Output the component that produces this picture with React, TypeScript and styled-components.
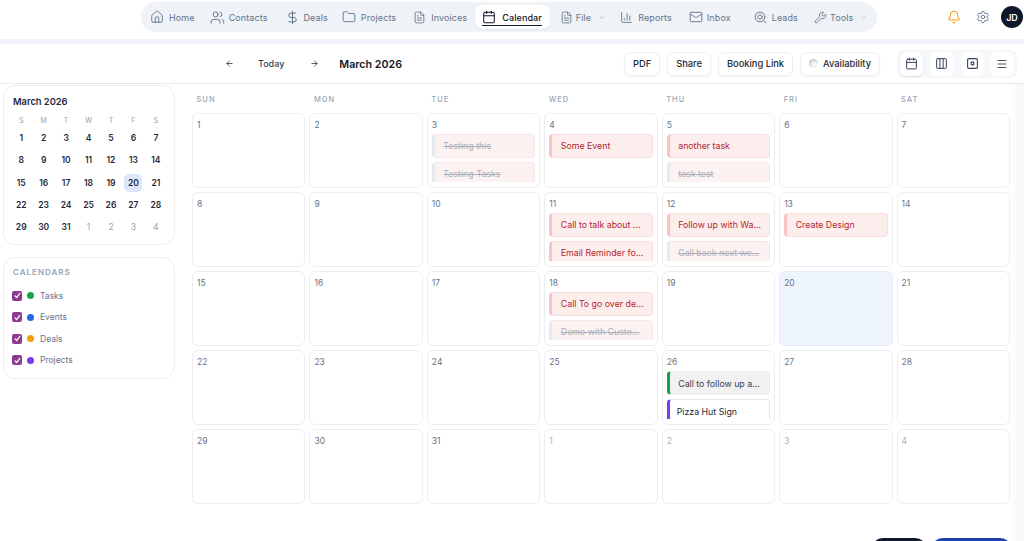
import styled, { createGlobalStyle } from "styled-components";
import {
  ArrowLeft,
  ArrowRight,
  Bell,
  Calendar,
  ChartColumn,
  ChevronDown,
  Columns3,
  DollarSign,
  FileText,
  Folder,
  House,
  Mail,
  Menu,
  Settings,
  Users,
  Wrench,
} from "lucide-react";

const GlobalStyle = createGlobalStyle`
  html, body {
    margin: 0;
    padding: 0;
    height: 541px;
    overflow: hidden;
    background: #fff;
    font-family: Inter, "Liberation Sans", sans-serif;
  }
  * { box-sizing: border-box; }
`;

const LeadsIcon = () => (
  <svg width="13" height="13" viewBox="0 0 24 24" fill="none" stroke="currentColor" strokeWidth="1.8" strokeLinecap="round">
    <circle cx="11" cy="11" r="9" />
    <circle cx="11" cy="11" r="4" />
    <path d="M18 18l4 4" />
  </svg>
);

const FocusIcon = () => (
  <svg width="13" height="13" viewBox="0 0 24 24" fill="none" stroke="currentColor" strokeWidth="2">
    <rect x="3" y="3" width="18" height="18" rx="2" />
    <rect x="9.5" y="9.5" width="5" height="5" rx="1" />
  </svg>
);

const navItems = [
  { label: "Home", icon: <House size={14} strokeWidth={1.6} />, gap: 5, after: 15 },
  { label: "Contacts", icon: <Users size={15} strokeWidth={1.6} />, gap: 4, after: 17 },
  { label: "Deals", icon: <DollarSign size={15} strokeWidth={1.6} />, gap: 4, after: 14 },
  { label: "Projects", icon: <Folder size={14} strokeWidth={1.6} />, gap: 5, after: 17 },
  { label: "Invoices", icon: <FileText size={13} strokeWidth={1.6} />, gap: 5, after: 8 },
  { label: "Calendar", icon: <Calendar size={14} strokeWidth={1.8} />, gap: 6, after: 10, active: true },
  { label: "File", icon: <FileText size={13} strokeWidth={1.6} />, gap: 3, after: 15, caret: true },
  { label: "Reports", icon: <ChartColumn size={13} strokeWidth={1.6} />, gap: 5, after: 17 },
  { label: "Inbox", icon: <Mail size={14} strokeWidth={1.6} />, gap: 4, after: 23 },
  { label: "Leads", icon: <LeadsIcon />, gap: 5, after: 16 },
  { label: "Tools", icon: <Wrench size={13} strokeWidth={1.6} />, gap: 3, after: 0, caret: true },
];

const weekdays = ["SUN", "MON", "TUE", "WED", "THU", "FRI", "SAT"];

type CalEvent = { title: string; kind: "open" | "done" | "call" | "project" };

const events: Record<number, CalEvent[]> = {
  3: [
    { title: "Testing this", kind: "done" },
    { title: "Testing Tasks", kind: "done" },
  ],
  4: [{ title: "Some Event", kind: "open" }],
  5: [
    { title: "another task", kind: "open" },
    { title: "task test", kind: "done" },
  ],
  11: [
    { title: "Call to talk about ...", kind: "open" },
    { title: "Email Reminder fo...", kind: "open" },
  ],
  12: [
    { title: "Follow up with Wa...", kind: "open" },
    { title: "Call back next we...", kind: "done" },
  ],
  13: [{ title: "Create Design", kind: "open" }],
  18: [
    { title: "Call To go over de...", kind: "open" },
    { title: "Demo with Custo...", kind: "done" },
  ],
  26: [
    { title: "Call to follow up a...", kind: "call" },
    { title: "Pizza Hut Sign", kind: "project" },
  ],
};

const miniDays = [
  ...Array.from({ length: 31 }, (_, i) => ({ day: i + 1, muted: false })),
  ...[1, 2, 3, 4].map((day) => ({ day, muted: true })),
];

const calendars = [
  { label: "Tasks", color: "#16a34a" },
  { label: "Events", color: "#2563eb" },
  { label: "Deals", color: "#f59e0b" },
  { label: "Projects", color: "#7c3aed" },
];

const App = () => {
  return (
    <Page>
      <GlobalStyle />
      <TopBar>
        <NavPill>
          {navItems.map((item) => (
            <NavItem key={item.label} $active={item.active} $gap={item.gap} $after={item.after}>
              {item.icon}
              <NavLabel $active={item.active}>{item.label}</NavLabel>
              {item.caret && <ChevronDown size={7} color="#94a3b8" style={{ marginLeft: 4 }} />}
            </NavItem>
          ))}
        </NavPill>
        <TopActions>
          <Bell size={14} color="#f59e0b" strokeWidth={1.8} />
          <Settings size={14} color="#64748b" strokeWidth={1.6} />
          <Avatar>JD</Avatar>
        </TopActions>
      </TopBar>

      <Toolbar>
        <DateNav>
          <ArrowLeft size={9} color="#1e293b" strokeWidth={2} />
          <TodayLabel>Today</TodayLabel>
          <ArrowRight size={9} color="#1e293b" strokeWidth={2} />
          <MonthTitle>March 2026</MonthTitle>
        </DateNav>
        <ToolActions>
          <ToolButton>PDF</ToolButton>
          <ToolButton>Share</ToolButton>
          <ToolButton>Booking Link</ToolButton>
          <ToolButton>
            <StatusDot />
            Availability
          </ToolButton>
          <ViewSwitch>
            <ViewButton $active>
              <Calendar size={13} strokeWidth={1.8} />
            </ViewButton>
            <ViewButton>
              <Columns3 size={13} strokeWidth={1.8} />
            </ViewButton>
            <ViewButton>
              <FocusIcon />
            </ViewButton>
            <ViewButton>
              <Menu size={12} strokeWidth={1.8} />
            </ViewButton>
          </ViewSwitch>
        </ToolActions>
      </Toolbar>

      <Body>
        <Sidebar>
          <MiniCard>
            <MiniTitle>March 2026</MiniTitle>
            <MiniGrid>
              {["S", "M", "T", "W", "T", "F", "S"].map((d, i) => (
                <MiniWeekday key={i}>{d}</MiniWeekday>
              ))}
              {miniDays.map((d) => (
                <MiniDay key={`${d.day}-${d.muted}`} $muted={d.muted} $today={!d.muted && d.day === 20}>
                  {d.day}
                </MiniDay>
              ))}
            </MiniGrid>
          </MiniCard>
          <CalendarsCard>
            <CalendarsTitle>CALENDARS</CalendarsTitle>
            {calendars.map((c) => (
              <CalendarRow key={c.label}>
                <CheckBox>
                  <svg width="7" height="7" viewBox="0 0 24 24" fill="none" stroke="#fff" strokeWidth="4" strokeLinecap="round" strokeLinejoin="round">
                    <path d="M4 13l5 6L20 5" />
                  </svg>
                </CheckBox>
                <Dot $color={c.color} />
                <span>{c.label}</span>
              </CalendarRow>
            ))}
          </CalendarsCard>
        </Sidebar>

        <Month>
          <WeekHeader>
            {weekdays.map((d) => (
              <WeekdayLabel key={d}>{d}</WeekdayLabel>
            ))}
          </WeekHeader>
          <MonthGrid>
            {miniDays.map((d) => (
              <DayCell key={`${d.day}-${d.muted}`} $today={!d.muted && d.day === 20}>
                <DayNumber $muted={d.muted}>{d.day}</DayNumber>
                <EventList>
                  {!d.muted &&
                    (events[d.day] || []).map((ev) => (
                      <EventChip key={ev.title} $kind={ev.kind}>
                        {ev.title}
                      </EventChip>
                    ))}
                </EventList>
              </DayCell>
            ))}
          </MonthGrid>
        </Month>
      </Body>

      <EdgeShade />
      <FloatingActions>
        <FloatingButton $color="#0f172a" $width={56} />
        <FloatingButton $color="#1e40af" $width={81} />
      </FloatingActions>
    </Page>
  );
};

const Page = styled.div`
  position: relative;
  width: 1024px;
  height: 541px;
  overflow: hidden;
  background: #fff;
`;

const TopBar = styled.header`
  height: 44px;
  display: flex;
  justify-content: space-between;
  padding: 2px 1px 0 141px;
  background: #fff;
  border-bottom: 5px solid #f1f4f8;
`;

const NavPill = styled.nav`
  height: 30px;
  width: 736px;
  display: flex;
  align-items: center;
  padding-left: 9px;
  border-radius: 15px;
  background: #eff3f8;
`;

const NavItem = styled.div<{ $active?: boolean; $gap: number; $after: number }>`
  position: relative;
  display: flex;
  align-items: center;
  gap: ${(p) => p.$gap}px;
  margin-right: ${(p) => p.$after}px;
  color: ${(p) => (p.$active ? "#111827" : "#64748b")};
  font-size: 9px;
  ${(p) =>
    p.$active &&
    `
    height: 24px;
    padding: 0 8px 0 7px;
    background: #fff;
    border-radius: 8px;
    box-shadow: 0 1px 2px rgba(15, 23, 42, 0.06);

    &::after {
      content: "";
      position: absolute;
      left: 7px;
      right: 8px;
      bottom: 3px;
      height: 1px;
      background: #111827;
    }
  `}
`;

const NavLabel = styled.span<{ $active?: boolean }>`
  font-weight: ${(p) => (p.$active ? 500 : 400)};
  letter-spacing: 0.1px;
`;

const TopActions = styled.div`
  height: 26px;
  margin-top: 2px;
  display: flex;
  align-items: center;
  gap: 15px;
`;

const Avatar = styled.div`
  width: 22px;
  height: 22px;
  margin-left: -4px;
  border-radius: 50%;
  display: flex;
  align-items: center;
  justify-content: center;
  background: #0f172a;
  color: #fff;
  font-size: 9px;
  font-weight: 600;
`;

const Toolbar = styled.div`
  height: 40px;
  display: flex;
  justify-content: space-between;
  align-items: center;
  padding: 0 7px 0 225px;
  border-bottom: 1px solid #e8ebef;
`;

const DateNav = styled.div`
  display: flex;
  align-items: center;
`;

const TodayLabel = styled.span`
  margin: 0 26px 0 24px;
  font-size: 9px;
  font-weight: 500;
  color: #334155;
`;

const MonthTitle = styled.h1`
  margin: 0 0 0 20px;
  padding-top: 1px;
  font-size: 10.7px;
  font-weight: 600;
  color: #111827;
`;

const ToolActions = styled.div`
  display: flex;
  align-items: center;
  gap: 7px;
`;

const ToolButton = styled.button`
  height: 24px;
  padding: 0 8px;
  display: flex;
  align-items: center;
  gap: 5px;
  background: #fff;
  border: 1px solid #eef0f3;
  border-radius: 6px;
  box-shadow: 0 1px 2px rgba(15, 23, 42, 0.05);
  font-family: inherit;
  font-size: 9.3px;
  font-weight: 500;
  color: #1f2937;
`;

const StatusDot = styled.span`
  width: 9px;
  height: 9px;
  border-radius: 50%;
  background: radial-gradient(circle at 60% 65%, #f1f5f9 0 30%, #a8b0ba 90%);
`;

const ViewSwitch = styled.div`
  margin-left: 10px;
  width: 120px;
  height: 28px;
  padding: 2px 3px;
  display: flex;
  justify-content: space-between;
  background: #f6f7f9;
  border-radius: 7px;
`;

const ViewButton = styled.button<{ $active?: boolean }>`
  width: 23px;
  height: 24px;
  padding: 0;
  display: flex;
  align-items: center;
  justify-content: center;
  border: none;
  border-radius: 6px;
  background: #fff;
  color: #334155;
  ${(p) => p.$active && "box-shadow: 0 1px 2px rgba(15, 23, 42, 0.1);"}
`;

const Body = styled.main`
  display: flex;
  align-items: flex-start;
  padding: 1px 14px 0 3px;
`;

const Sidebar = styled.aside`
  width: 172px;
  flex-shrink: 0;
  display: flex;
  flex-direction: column;
  gap: 12px;
`;

const MiniCard = styled.section`
  height: 160px;
  padding: 10px 6px 0;
  border: 1px solid #eceef2;
  border-radius: 12px;
  background: #fff;
`;

const MiniTitle = styled.div`
  height: 12px;
  margin-left: 3px;
  font-size: 9.3px;
  line-height: 12px;
  font-weight: 600;
  color: #1f2937;
`;

const MiniGrid = styled.div`
  margin-top: 5px;
  display: grid;
  grid-template-columns: repeat(7, 22.45px);
  grid-template-rows: 14px repeat(5, 22.3px);
  justify-items: center;
  align-items: center;
`;

const MiniWeekday = styled.span`
  font-size: 7px;
  color: #94a3b8;
`;

const MiniDay = styled.span<{ $muted: boolean; $today: boolean }>`
  width: 18px;
  height: 18px;
  display: flex;
  align-items: center;
  justify-content: center;
  border-radius: 5px;
  font-size: 8.5px;
  font-weight: ${(p) => (p.$muted ? 400 : 600)};
  color: ${(p) => (p.$muted ? "#9ca3af" : "#1f2937")};
  background: ${(p) => (p.$today ? "#dbe8fb" : "transparent")};
`;

const CalendarsCard = styled.section`
  height: 122px;
  padding: 9px 8px 0;
  border: 1px solid #eceef2;
  border-radius: 12px;
  background: #fff;
`;

const CalendarsTitle = styled.div`
  height: 10px;
  margin-bottom: 8px;
  margin-left: 1px;
  font-size: 8px;
  line-height: 10px;
  font-weight: 600;
  letter-spacing: 1px;
  color: #94a3b8;
`;

const CalendarRow = styled.label`
  height: 21.5px;
  display: flex;
  align-items: center;
  font-size: 8.5px;
  color: #64748b;
`;

const CheckBox = styled.span`
  width: 10px;
  height: 10px;
  margin-right: 5px;
  display: flex;
  align-items: center;
  justify-content: center;
  border-radius: 2px;
  background: #8e3b8f;
`;

const Dot = styled.span<{ $color: string }>`
  width: 7px;
  height: 7px;
  margin-right: 6px;
  border-radius: 50%;
  background: ${(p) => p.$color};
`;

const Month = styled.section`
  flex: 1;
  margin-left: 17px;
`;

const WeekHeader = styled.div`
  height: 27.5px;
  padding-top: 2px;
  display: grid;
  grid-template-columns: repeat(7, 1fr);
  column-gap: 4px;
  align-items: center;
`;

const WeekdayLabel = styled.span`
  padding-left: 4.5px;
  font-size: 7.5px;
  font-weight: 500;
  letter-spacing: 1px;
  color: #9aa5b5;
`;

const MonthGrid = styled.div`
  display: grid;
  grid-template-columns: repeat(7, 1fr);
  grid-auto-rows: 75.2px;
  gap: 4px;
`;

const DayCell = styled.div<{ $today: boolean }>`
  padding: 4px 4px 5px 4px;
  display: flex;
  flex-direction: column;
  gap: 3px;
  border: 1px solid ${(p) => (p.$today ? "#e4edf9" : "#eceef2")};
  border-radius: 6px;
  background: ${(p) => (p.$today ? "#eef4fc" : "#fff")};
`;

const DayNumber = styled.span<{ $muted: boolean }>`
  height: 13px;
  flex-shrink: 0;
  font-size: 8.5px;
  line-height: 15px;
  color: ${(p) => (p.$muted ? "#aab2bd" : "#64748b")};
`;

const EventList = styled.div`
  flex: 1;
  min-height: 0;
  overflow: hidden;
  display: flex;
  flex-direction: column;
  gap: 4px;
`;

const eventTheme = {
  open: { bg: "#fdeeee", border: "#fbdcdc", bar: "#f9c4c4", text: "#b3262e", line: "none", indent: 11.5 },
  done: { bg: "#fdf2f2", border: "#fbe6e6", bar: "#e6eaf0", text: "#a9b0bb", line: "line-through", indent: 11.5 },
  call: { bg: "#f1f1f2", border: "#f1f1f2", bar: "#16a34a", text: "#374151", line: "none", indent: 11.5 },
  project: { bg: "#fff", border: "#e5e7eb", bar: "#7c3aed", text: "#1f2937", line: "none", indent: 10 },
};

const EventChip = styled.div<{ $kind: CalEvent["kind"] }>`
  height: 24px;
  flex-shrink: 0;
  padding-left: ${(p) => eventTheme[p.$kind].indent - 3}px;
  display: flex;
  align-items: center;
  white-space: nowrap;
  background: ${(p) => eventTheme[p.$kind].bg};
  border: 1px solid ${(p) => eventTheme[p.$kind].border};
  border-left: 3px solid ${(p) => eventTheme[p.$kind].bar};
  border-radius: 4px;
  color: ${(p) => eventTheme[p.$kind].text};
  text-decoration: ${(p) => eventTheme[p.$kind].line};
  font-size: 8.8px;
`;

const EdgeShade = styled.div`
  position: absolute;
  top: 84px;
  right: 0;
  bottom: 0;
  width: 13px;
  background: linear-gradient(to right, rgba(246, 247, 249, 0), #f8f9fa 60%);
`;

const FloatingActions = styled.div`
  position: absolute;
  right: 12px;
  top: 537.5px;
  display: flex;
  gap: 4px;
`;

const FloatingButton = styled.div<{ $color: string; $width: number }>`
  width: ${(p) => p.$width}px;
  height: 24px;
  border-radius: 12px;
  background: ${(p) => p.$color};
`;

export default App;
